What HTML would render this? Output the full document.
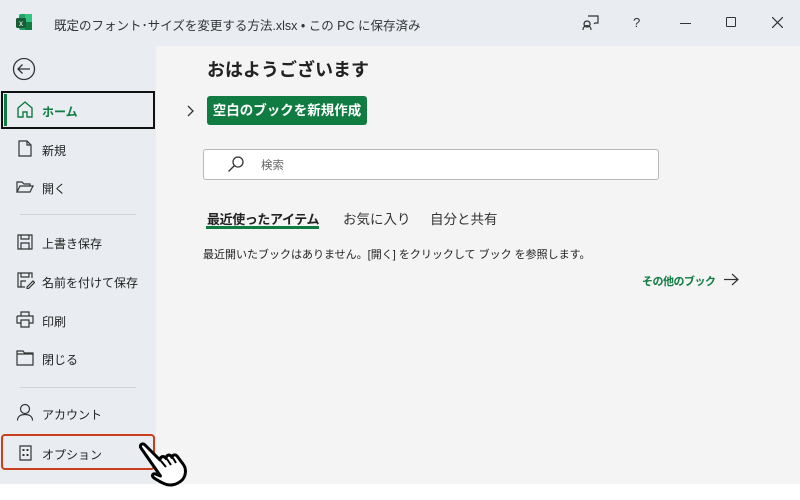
<!DOCTYPE html>
<html><head><meta charset="utf-8"><style>
*{margin:0;padding:0;box-sizing:border-box}
body{width:800px;height:500px;overflow:hidden;background:#fff;font-family:"Liberation Sans","Noto Sans CJK JP",sans-serif;color:#222;position:relative}
.abs{position:absolute}
.t{font-size:12px;white-space:nowrap}
</style></head><body>
<div class="abs" style="left:0;top:0;width:800px;height:484px;background:#e9edf2"></div>
<div class="abs" style="left:156px;top:46px;width:644px;height:438px;background:#f4f4f4"></div>
<svg class="abs" style="left:15px;top:13px" width="18" height="18" viewBox="0 0 18 18">
<rect x="4" y="1" width="13" height="16" rx="2" fill="#21a366"/><rect x="10" y="1" width="7" height="8" fill="#33c481"/><rect x="10" y="9" width="7" height="8" fill="#107c41"/>
<rect x="1" y="5" width="10" height="10" rx="1.5" fill="#185c37"/><text x="6" y="13" font-size="8" fill="#fff" text-anchor="middle" font-family="Liberation Sans">x</text></svg>
<div class="abs t" style="left:54px;top:15px;font-size:12.5px;color:#333">既定のフォント･サイズを変更する方法.xlsx • この PC に保存済み</div>
<svg class="abs" style="left:582px;top:14px" width="18" height="18" viewBox="0 0 18 18" fill="none" stroke="#333" stroke-width="1.2"><path d="M6 2h10v7h-3l-1 1M5 7a3 3 0 1 0 0.1 0M1 16c0-3 2-4.5 4-4.5s4 1.5 4 4.5"/></svg>
<div class="abs t" style="left:633px;top:15px;font-size:13px;color:#333">?</div>
<div class="abs" style="left:680px;top:23px;width:11px;height:1px;background:#333"></div>
<div class="abs" style="left:726px;top:17px;width:10px;height:10px;border:1.2px solid #333;border-radius:1px"></div>
<svg class="abs" style="left:772px;top:17px" width="11" height="11" stroke="#333" stroke-width="1.2"><path d="M0 0L11 11M11 0L0 11"/></svg>
<svg class="abs" style="left:12px;top:57px" width="24" height="24" fill="none" stroke="#333" stroke-width="1.3"><circle cx="12" cy="12" r="10.5"/><path d="M18 12H6M10.5 7.5L6 12l4.5 4.5"/></svg>
<div class="abs" style="left:1px;top:91px;width:154px;height:38px;border:2px solid #111"></div>
<div class="abs" style="left:4px;top:94px;width:3px;height:32px;background:#107c41"></div>
<svg class="abs" style="left:17px;top:101px" width="16" height="17" fill="none" stroke="#107c41" stroke-width="1.4"><path d="M1 7L8 1l7 6v9H10v-5H6v5H1z"/></svg>
<div class="abs t" style="left:42px;top:103px;color:#107c41;font-weight:bold">ホーム</div>
<svg class="abs" style="left:18px;top:140px" width="14" height="17" fill="none" stroke="#333" stroke-width="1.2"><path d="M1 1h8l4 4v11H1zM9 1v4h4"/></svg>
<div class="abs t" style="left:42px;top:142px">新規</div>
<svg class="abs" style="left:16px;top:180px" width="18" height="14" fill="none" stroke="#333" stroke-width="1.2"><path d="M1 12V2h5l2 2h6v2M1 12l3-6h13l-3 6z"/></svg>
<div class="abs t" style="left:42px;top:180px">開く</div>
<div class="abs" style="left:20px;top:214px;width:116px;height:1px;background:#d0d4d8"></div>
<svg class="abs" style="left:17px;top:234px" width="16" height="16" fill="none" stroke="#333" stroke-width="1.2"><path d="M1 1h14v14H1zM4 1v4h8V1M4 15V9h8v6"/></svg>
<div class="abs t" style="left:42px;top:235px">上書き保存</div>
<svg class="abs" style="left:17px;top:272px" width="18" height="17" fill="none" stroke="#333" stroke-width="1.2"><path d="M8 15H1V1h14v5M4 1v4h8V1M4 15V9h5M10 15l6-6 1.5 1.5-6 6H10z"/></svg>
<div class="abs t" style="left:42px;top:274px">名前を付けて保存</div>
<svg class="abs" style="left:16px;top:311px" width="18" height="17" fill="none" stroke="#333" stroke-width="1.2"><path d="M5 5V1h8v4M1 5h16v7h-4M5 12H1V5M5 9h8v7H5z"/></svg>
<div class="abs t" style="left:42px;top:313px">印刷</div>
<svg class="abs" style="left:16px;top:350px" width="18" height="16" fill="none" stroke="#333" stroke-width="1.2"><path d="M1 1h6l1.5 2H17v12H1zM1 4h16"/></svg>
<div class="abs t" style="left:42px;top:351px">閉じる</div>
<div class="abs" style="left:20px;top:387px;width:116px;height:1px;background:#d0d4d8"></div>
<svg class="abs" style="left:16px;top:403px" width="18" height="18" fill="none" stroke="#333" stroke-width="1.2"><circle cx="9" cy="6" r="4.5"/><path d="M1.5 17.5c0-4 3-6 7.5-6s7.5 2 7.5 6"/></svg>
<div class="abs t" style="left:42px;top:406px">アカウント</div>
<div class="abs" style="left:1px;top:434px;width:154px;height:36px;border:2.5px solid #c9401e;border-radius:4px"></div>
<svg class="abs" style="left:19px;top:445px" width="13" height="16" fill="none" stroke="#333" stroke-width="1.2"><path d="M1 1h11v14H1z"/><path d="M3.5 5h2M3.5 10h2M7.5 5h2M7.5 10h2" stroke-width="2"/></svg>
<div class="abs t" style="left:42px;top:446px">オプション</div>
<div class="abs t" style="left:207px;top:56px;font-size:18px;font-weight:bold;color:#222">おはようございます</div>
<svg class="abs" style="left:186px;top:105px" width="8" height="12" fill="none" stroke="#333" stroke-width="1.3"><path d="M2 1l5 5-5 5"/></svg>
<div class="abs" style="left:207px;top:96px;width:160px;height:29px;background:#107c41;border-radius:3px;color:#fff;font-size:13.5px;font-weight:bold;text-align:center;line-height:29px">空白のブックを新規作成</div>
<div class="abs" style="left:203px;top:149px;width:456px;height:31px;background:#fff;border:1px solid #b8b8b8;border-radius:3px"></div>
<svg class="abs" style="left:227px;top:155px" width="18" height="18" fill="none" stroke="#333" stroke-width="1.3"><circle cx="11" cy="7" r="5"/><path d="M7.5 10.5L1.5 16.5"/></svg>
<div class="abs t" style="left:261px;top:157px;color:#666;font-size:11.5px">検索</div>
<div class="abs t" style="left:207px;top:209px;font-size:13px;letter-spacing:-0.4px;font-weight:bold">最近使ったアイテム</div>
<div class="abs" style="left:206px;top:226px;width:113px;height:3px;background:#107c41"></div>
<div class="abs t" style="left:343px;top:208px;font-size:13.5px;color:#333">お気に入り</div>
<div class="abs t" style="left:430px;top:208px;font-size:13.5px;color:#333">自分と共有</div>
<div class="abs t" style="left:203px;top:246px;font-size:11px;color:#222">最近開いたブックはありません。[開く] をクリックして ブック を参照します。</div>
<div class="abs t" style="left:642px;top:273px;font-size:11px;letter-spacing:-0.5px;font-weight:bold;color:#107c41">その他のブック</div>
<svg class="abs" style="left:723px;top:273px" width="16" height="13" fill="none" stroke="#333" stroke-width="1.2"><path d="M1 6.5h14M9 1l6 5.5L9 12"/></svg>
<svg class="abs" style="left:134px;top:442px" width="56" height="52" viewBox="0 0 56 52">
<path d="M7 6c-2-2.5 1-5.5 3.5-3.5L26 18c0-3 3-4.5 5-2.5l1 1c0-3 3-4.5 5-2.5l1 1.5c0-2.5 3-3.5 5-1.5l6 8c4 5 3 13-2 17s-11 5-16 3c-5-2-8-4-11-6-3-2.5-1-5 1.5-4l5 2z" fill="#fff" stroke="#000" stroke-width="3" stroke-linejoin="round"/>
<path d="M27 19l5 6M33 17l4 6M39 16l3 5" fill="none" stroke="#000" stroke-width="2"/></svg>
</body></html>
